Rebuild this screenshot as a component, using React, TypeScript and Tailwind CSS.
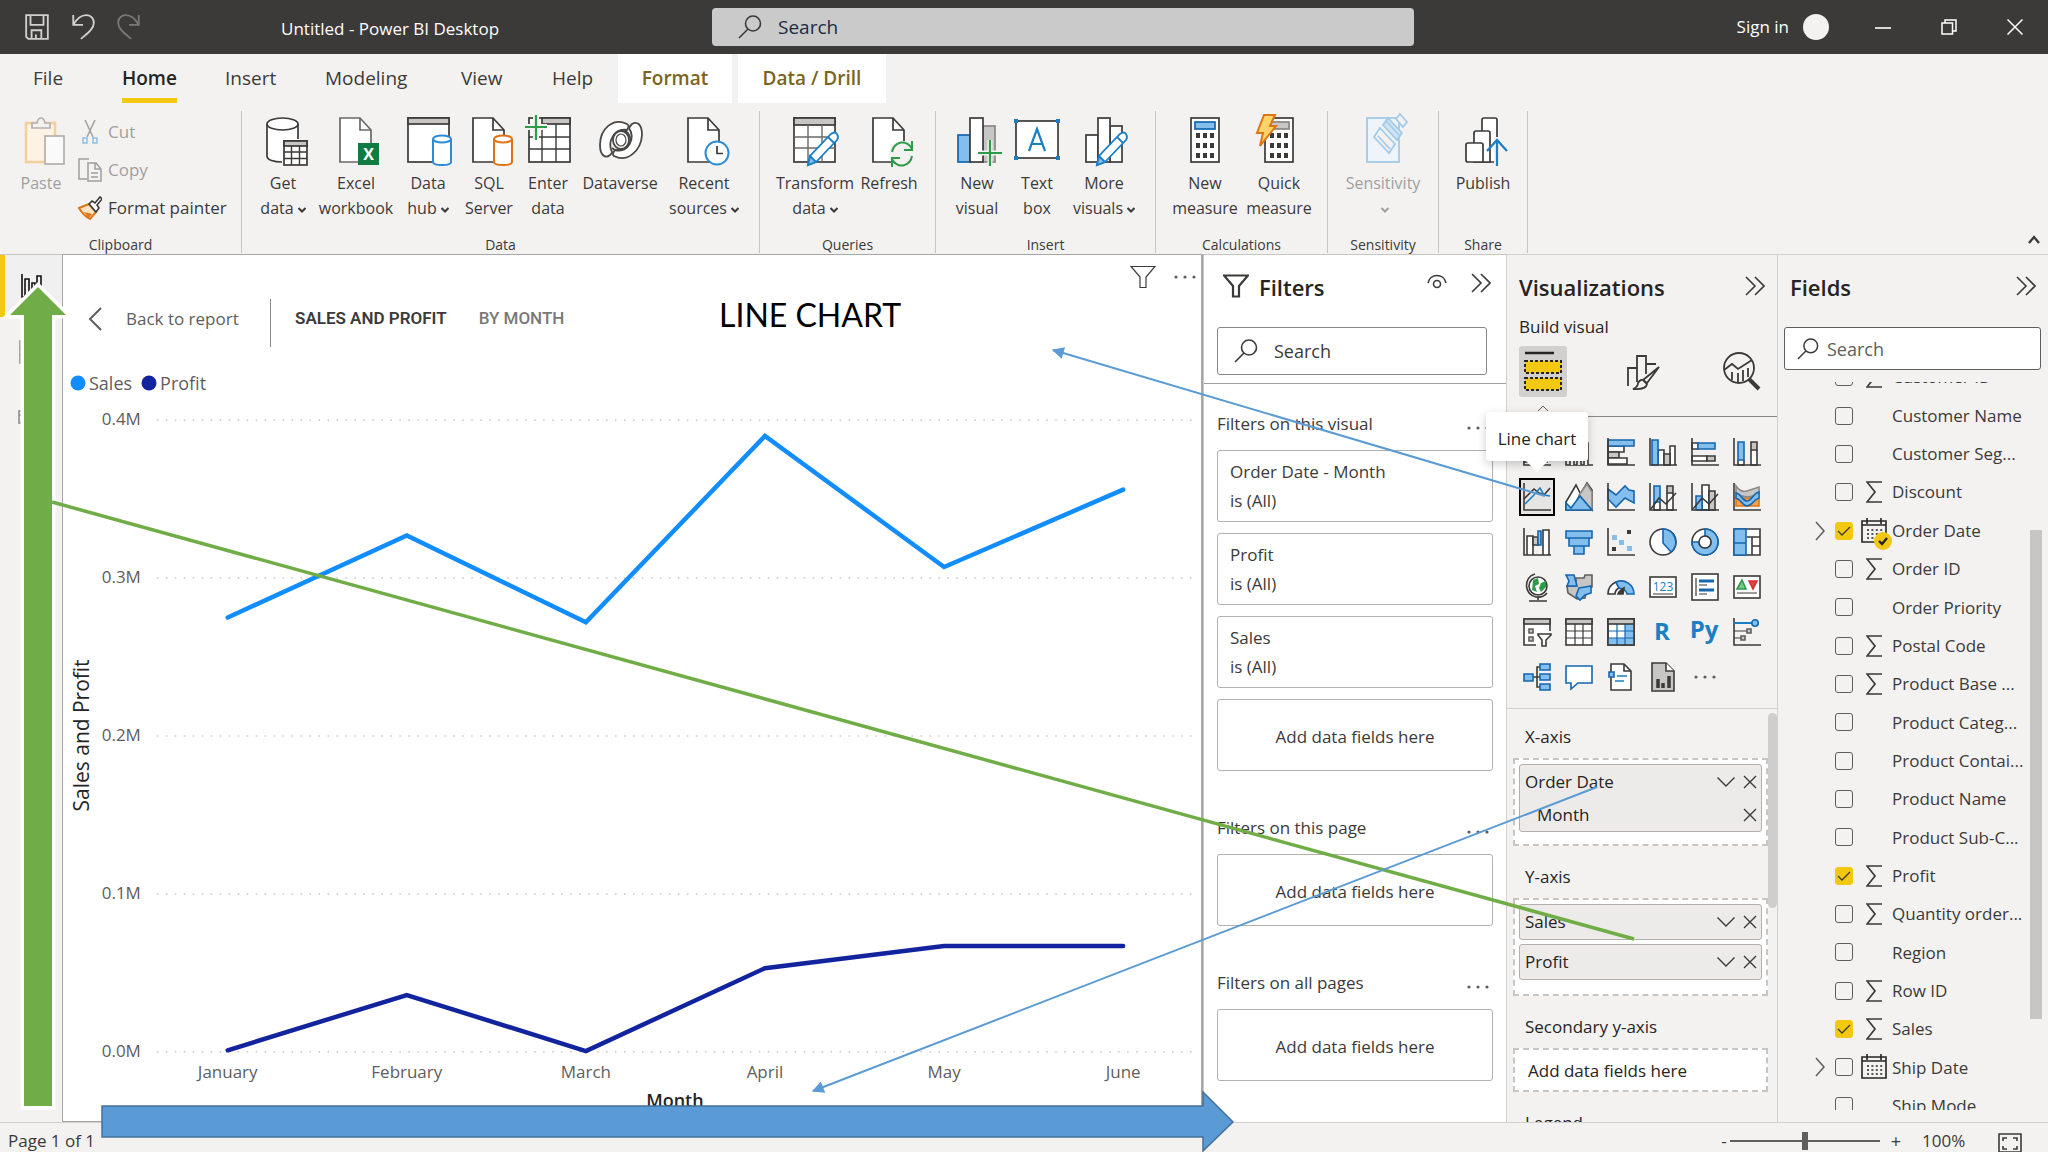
import { useState, type ReactNode } from "react";
import clsx from "clsx";

const INK = "#3b3a39";
const BLUE = "#1a7fc4";
const BLUE_FILL = "#83beec";
const BLUE_EDGE = "#1466ae";
const GREY_FILL = "#c8c6c4";
const GREEN = "#2f9b49";
const ORANGE = "#de7414";

/* ---------- Ribbon icons (48 x 52 box) ---------- */

function RibbonIcon({ children }: { children: ReactNode }) {
  return (
    <svg
      viewBox="0 0 48 52"
      className="h-[52px] w-12 shrink-0 overflow-visible"
      fill="none"
      stroke={INK}
      strokeWidth="1.7"
      aria-hidden="true"
    >
      {children}
    </svg>
  );
}

function Page() {
  return (
    <>
      <path d="M8 3H28L39 15V47H8Z" fill="#fff" />
      <path d="M28 3V15H39" />
    </>
  );
}

function Cylinder({ color }: { color: string }) {
  return (
    <g stroke={color} strokeWidth="2">
      <path d="M29 24V47C29 49 33 50 38 50S47 49 47 47V24" fill="#fff" />
      <ellipse cx="38" cy="24" rx="9" ry="3.5" fill="#fff" />
    </g>
  );
}

function Pencil() {
  return (
    <g stroke={BLUE} strokeWidth="1.8">
      <path d="M40 19Q44 16 46 19T46 25L25 47L17 50L19 41Z" fill="#fff" />
      <path d="M19 41L25 47L17 50Z" fill={BLUE_FILL} />
      <path d="M37 22L43 28" />
    </g>
  );
}

function Keys({ x }: { x: number }) {
  return (
    <g fill={INK} stroke="none">
      {[18, 28, 38].map((y) =>
        [0, 7, 14].map((dx) => <rect key={`${y}-${dx}`} x={x + dx} y={y} width="4" height="5" />),
      )}
    </g>
  );
}

const ribbonIcons: Record<string, ReactNode> = {
  getData: (
    <>
      <path d="M8 9V41C8 45 15 47 23 47H25V26H39V9Z" fill="#fff" stroke="none" />
      <path d="M8 9V41C8 45 15 47 23 47M39 9V24" />
      <ellipse cx="23.500" cy="9" rx="15.500" ry="6" fill="#fff" />
      <rect x="25" y="26" width="23" height="24" fill="#fff" />
      <rect x="25" y="26" width="23" height="5" fill={GREY_FILL} />
      <path d="M25 37H48M25 43.500H48M32.500 31V50M40.500 31V50" strokeWidth="1.400" />
    </>
  ),
  excel: (
    <>
      <g stroke="#6b6967">
        <Page />
      </g>
      <rect x="26" y="28" width="21" height="22" fill="#107c41" stroke="none" />
      <text x="36.500" y="45" textAnchor="middle" fill="#fff" stroke="none" fontSize="16" fontWeight="700" fontFamily="Open Sans">
        X
      </text>
    </>
  ),
  dataHub: (
    <>
      <rect x="4" y="3" width="41" height="44" fill="#fff" />
      <rect x="4" y="3" width="41" height="6" fill={GREY_FILL} />
      <Cylinder color="#2b8bd6" />
    </>
  ),
  sql: (
    <>
      <Page />
      <Cylinder color={ORANGE} />
    </>
  ),
  enterData: (
    <>
      <rect x="5" y="3" width="41" height="44" fill="#fff" />
      <rect x="18" y="3" width="28" height="6" fill={GREY_FILL} />
      <path d="M5 22H46M5 34H46M18 9V47M32 9V47" strokeWidth="1.400" />
      <path d="M1 12H23M12 1V24" stroke="#f3f2f1" strokeWidth="6" />
      <path d="M1 12H23M12 0V25" stroke={GREEN} strokeWidth="2.200" />
    </>
  ),
  dataverse: (
    <g stroke="#4a4846" strokeWidth="1.8" fill="#fff">
      <path d="M31 9C17 2 4 14 4 30C4 40 9 44 14 40C15 39 16 38 16 37C11 27 18 13 31 15C33 12 33 10 31 9Z" />
      <path d="M18 41C31 48 45 36 46 20C46 9 41 6 36 9C35 10 34 11 33 13C40 24 32 38 19 35C17 38 16 40 18 41Z" />
      <path d="M25 15C33 15 36 24 33 29C30 35 20 37 16 33" fill="none" />
      <ellipse cx="25" cy="25" rx="8" ry="9" />
      <ellipse cx="25" cy="25" rx="5" ry="6" strokeWidth="1.2" />
    </g>
  ),
  recent: (
    <>
      <Page />
      <circle cx="37" cy="38" r="11.500" fill="#fff" stroke="#2b8bd6" strokeWidth="2" />
      <path d="M37 31V38.500H43" />
    </>
  ),
  transform: (
    <>
      <rect x="3" y="3" width="41" height="44" fill="#fff" />
      <rect x="3" y="3" width="41" height="7" fill={GREY_FILL} />
      <path d="M3 22H44M3 33H44M17 10V47M31 10V47" strokeWidth="1.400" stroke="#6b6967" />
      <Pencil />
    </>
  ),
  refresh: (
    <>
      <Page />
      <circle cx="37" cy="39" r="13" fill="#f3f2f1" stroke="none" />
      <path d="M27 37A10.500 11 0 0 1 47 34M47 26V35H39M47 41A10.500 11 0 0 1 27 44M27 52V43H35" stroke={GREEN} strokeWidth="2" />
    </>
  ),
  newVisual: (
    <>
      <rect x="5" y="20" width="12" height="27" fill={BLUE_FILL} stroke={BLUE_EDGE} />
      <rect x="30" y="11" width="12" height="36" fill={GREY_FILL} stroke="#8a8886" />
      <rect x="17" y="3" width="13" height="44" fill="#fff" />
      <path d="M25 38H49M37 25V51" stroke="#f3f2f1" strokeWidth="5" />
      <path d="M25 38H49M37 25V51" stroke={GREEN} strokeWidth="2.200" />
    </>
  ),
  textBox: (
    <>
      <rect x="3" y="6" width="42" height="37" fill="#fff" />
      <g fill={BLUE} stroke="none">
        <rect x="1" y="4" width="4" height="4" />
        <rect x="43" y="4" width="4" height="4" />
        <rect x="1" y="41" width="4" height="4" />
        <rect x="43" y="41" width="4" height="4" />
      </g>
      <path d="M16 36L24 14L32 36M19 29H29" stroke={BLUE} strokeWidth="2.200" />
    </>
  ),
  moreVisuals: (
    <>
      <rect x="6" y="20" width="12" height="27" fill="#fff" />
      <rect x="30" y="11" width="12" height="36" fill="#fff" />
      <rect x="18" y="3" width="12" height="44" fill="#fff" />
      <Pencil />
    </>
  ),
  newMeasure: (
    <>
      <rect x="10" y="3" width="28" height="44" fill="#fff" />
      <rect x="14" y="7" width="20" height="7" fill={BLUE_FILL} stroke={BLUE_EDGE} />
      <Keys x={15} />
    </>
  ),
  quickMeasure: (
    <>
      <rect x="10" y="3" width="28" height="44" fill="#fff" />
      <rect x="16" y="7" width="18" height="7" fill={GREY_FILL} stroke="#8a8886" />
      <Keys x={15} />
      <path d="M9 0H20L15 11H21L5 31L8 18H2Z" fill="#ffd56b" stroke={ORANGE} strokeWidth="2" />
    </>
  ),
  sensitivity: (
    <g stroke="#a3cbe8" strokeWidth="1.800">
      <rect x="8" y="3" width="32" height="44" fill="#eef4f9" />
      <path d="M21 13L36 29L30 38L15 22Z" fill="#f3f2f1" />
      <path d="M19 21L31 34" />
      <path d="M29 3L43 18L38 25L24 10Z" fill="#cfe3f3" />
      <path d="M27 6L41 21" />
      <path d="M41 -1L48 7L44 12L37 4Z" fill="#f3f2f1" />
    </g>
  ),
  publish: (
    <>
      <path d="M23 47V5Q23 3 25 3H36Q38 3 38 5V47Z" fill="#fff" />
      <path d="M15 47V18Q15 16 17 16H29Q31 16 31 18V47Z" fill="#fff" />
      <path d="M7 45V30Q7 28 9 28H22Q24 28 24 30V47H9Q7 47 7 45Z" fill="#fff" />
      <path d="M38 22V52" stroke="#f3f2f1" strokeWidth="6" />
      <path d="M38 26V51M28 36L38 25L48 36" stroke={BLUE} strokeWidth="2.200" />
    </>
  ),
};

/* ---------- Small shared glyphs ---------- */

function SearchIcon({ className }: { className?: string }) {
  return (
    <svg viewBox="0 0 24 24" className={className} fill="none" stroke={INK} strokeWidth="1.6" aria-hidden="true">
      <circle cx="15" cy="8.500" r="7.500" />
      <path d="M10 14L1 23" />
    </svg>
  );
}

function DoubleChevron() {
  return (
    <svg viewBox="0 0 20 20" className="size-5" fill="none" stroke={INK} strokeWidth="1.6" aria-hidden="true">
      <path d="M1 1L10 10L1 19M10 1L19 10L10 19" />
    </svg>
  );
}

function Caret() {
  return (
    <svg viewBox="0 0 8 6" className="ml-1 inline-block h-[6px] w-2 align-middle" fill="none" stroke="currentColor" strokeWidth="2" aria-hidden="true">
      <path d="M0.500 1L4 4.500L7.500 1" />
    </svg>
  );
}

function Dots() {
  return (
    <svg viewBox="0 0 22 4" className="h-1 w-[22px]" fill="#605e5c" aria-hidden="true">
      <circle cx="2" cy="2" r="1.600" />
      <circle cx="11" cy="2" r="1.600" />
      <circle cx="20" cy="2" r="1.600" />
    </svg>
  );
}

function Funnel({ className, weight }: { className?: string; weight: number }) {
  return (
    <svg viewBox="0 0 26 24" className={className} fill="none" stroke={INK} strokeWidth={weight} aria-hidden="true">
      <path d="M1 1.500H25L16 12V22.500H10V12Z" />
    </svg>
  );
}

/* ---------- Title bar ---------- */

function TitleBar() {
  return (
    <header className="flex h-[54px] shrink-0 items-center bg-[#3b3a39] pl-6 text-white">
      <div className="flex w-[257px] items-center gap-5">
        <button aria-label="Save">
          <svg viewBox="0 0 24 24" className="size-[26px]" fill="none" stroke="#d2d0ce" strokeWidth="1.7">
            <path d="M2 1H22V23H4L2 21ZM6 1V10H18V1M7 23V15H16V23M11 19V23" />
          </svg>
        </button>
        <button aria-label="Undo">
          <svg viewBox="0 0 24 24" className="size-[26px]" fill="none" stroke="#d2d0ce" strokeWidth="1.7">
            <path d="M3 1V10H12M3 10C7 3 11 1 15 1C20 1 22 5 22 8C22 14 16 18 10 23" />
          </svg>
        </button>
        <button aria-label="Redo">
          <svg viewBox="0 0 24 24" className="size-[26px]" fill="none" stroke="#7a7876" strokeWidth="1.7">
            <path d="M21 1V10H12M21 10C17 3 13 1 9 1C4 1 2 5 2 8C2 14 8 18 14 23" />
          </svg>
        </button>
      </div>
      <h1 className="w-[431px] pt-1 text-[17px]">Untitled - Power BI Desktop</h1>
      <label className="mb-px flex h-[38px] w-[702px] items-center gap-4 rounded-sm bg-[#cacaca] pl-[26px]">
        <SearchIcon className="size-6" />
        <input
          aria-label="Search commands"
          placeholder="Search"
          className="h-full flex-1 bg-transparent text-[19px] text-[#1b2a41] outline-none placeholder:text-[#1b2a41]"
        />
      </label>
      <div className="ml-auto flex items-center">
        <button className="text-[17px]">Sign in</button>
        <span className="ml-[14px] size-[26px] rounded-full bg-[#f3f2f1]" />
        <button aria-label="Minimize" className="ml-[42px] grid h-8 w-6 place-items-center">
          <svg viewBox="0 0 16 16" className="size-4" stroke="#fff" strokeWidth="1.6">
            <path d="M0 9H16" />
          </svg>
        </button>
        <button aria-label="Restore" className="ml-[42px] grid h-8 w-6 place-items-center">
          <svg viewBox="0 0 16 16" className="size-4" fill="none" stroke="#fff" strokeWidth="1.5">
            <path d="M1 4H11.500V15H1ZM4 4V1H15V12H12" />
          </svg>
        </button>
        <button aria-label="Close" className="mr-[21px] ml-[42px] grid h-8 w-6 place-items-center">
          <svg viewBox="0 0 16 16" className="size-4" stroke="#fff" strokeWidth="1.5">
            <path d="M0.500 0.500L15.500 15.500M15.500 0.500L0.500 15.500" />
          </svg>
        </button>
      </div>
    </header>
  );
}

/* ---------- Ribbon ---------- */

const tabs = [
  { name: "File", className: "w-[98px] pl-[33px]" },
  { name: "Home", className: "w-[103px] pl-6" },
  { name: "Insert", className: "w-[100px] pl-6" },
  { name: "Modeling", className: "w-[136px] pl-6" },
  { name: "View", className: "w-[91px] pl-6" },
  { name: "Help", className: "w-[90px] pl-6" },
];

function RibbonTabs() {
  return (
    <nav className="flex h-[49px] shrink-0 text-[19px] text-[#3b3a39]">
      {tabs.map((tab) => (
        <button key={tab.name} className={clsx("text-left", tab.className)}>
          {tab.name === "Home" ? (
            <span className="inline-flex h-[49px] items-center border-b-[5px] border-[#f2c811] pt-1 font-semibold text-[#252423]">
              Home
            </span>
          ) : (
            tab.name
          )}
        </button>
      ))}
      <button className="mr-[6px] w-[114px] bg-white font-semibold text-[#7a6520]">Format</button>
      <button className="w-[148px] bg-white font-semibold text-[#7a6520]">Data / Drill</button>
    </nav>
  );
}

type RibbonItem = { icon: string; lines: string[]; caret?: boolean; width: string; disabled?: boolean };

const ribbonGroups: { name: string; className: string; pad: string; items: RibbonItem[] }[] = [
  {
    name: "Data",
    className: "w-[518px]",
    pad: "pl-2",
    items: [
      { icon: "getData", lines: ["Get", "data"], caret: true, width: "w-[66px]" },
      { icon: "excel", lines: ["Excel", "workbook"], width: "w-[80px]" },
      { icon: "dataHub", lines: ["Data", "hub"], caret: true, width: "w-[64px]" },
      { icon: "sql", lines: ["SQL", "Server"], width: "w-[58px]" },
      { icon: "enterData", lines: ["Enter", "data"], width: "w-[60px]" },
      { icon: "dataverse", lines: ["Dataverse"], width: "w-[84px]" },
      { icon: "recent", lines: ["Recent", "sources"], caret: true, width: "w-[84px]" },
    ],
  },
  {
    name: "Queries",
    className: "w-[176px]",
    pad: "pl-[14px]",
    items: [
      { icon: "transform", lines: ["Transform", "data"], caret: true, width: "w-[82px]" },
      { icon: "refresh", lines: ["Refresh"], width: "w-[66px]" },
    ],
  },
  {
    name: "Insert",
    className: "w-[220px]",
    pad: "pl-[14px]",
    items: [
      { icon: "newVisual", lines: ["New", "visual"], width: "w-[54px]" },
      { icon: "textBox", lines: ["Text", "box"], width: "w-[66px]" },
      { icon: "moreVisuals", lines: ["More", "visuals"], caret: true, width: "w-[68px]" },
    ],
  },
  {
    name: "Calculations",
    className: "w-[172px]",
    pad: "pl-3",
    items: [
      { icon: "newMeasure", lines: ["New", "measure"], width: "w-[74px]" },
      { icon: "quickMeasure", lines: ["Quick", "measure"], width: "w-[74px]" },
    ],
  },
  {
    name: "Sensitivity",
    className: "w-[111px]",
    pad: "pl-2",
    items: [{ icon: "sensitivity", lines: ["Sensitivity", ""], caret: true, width: "w-[94px]", disabled: true }],
  },
  {
    name: "Share",
    className: "w-[89px]",
    pad: "pl-2",
    items: [{ icon: "publish", lines: ["Publish"], width: "w-[72px]" }],
  },
];

function RibbonButton({ item }: { item: RibbonItem }) {
  return (
    <button
      disabled={item.disabled}
      className={clsx(
        "flex flex-col items-center text-base leading-[25px] whitespace-nowrap",
        item.width,
        item.disabled ? "text-[#a19f9d]" : "text-[#3b3a39]",
      )}
    >
      <RibbonIcon>{ribbonIcons[item.icon]}</RibbonIcon>
      {item.lines.map((line, i) => (
        <span key={i} className={i === 0 ? "mt-1" : undefined}>
          {line}
          {item.caret && i === item.lines.length - 1 && <Caret />}
        </span>
      ))}
    </button>
  );
}

function ClipboardGroup() {
  return (
    <section className="flex w-[242px] shrink-0 flex-col justify-between border-r border-[#c8c6c4]">
      <div className="flex pl-[14px]">
        <button disabled className="flex w-[54px] flex-col items-center pt-1 text-base leading-[25px] text-[#a19f9d]">
          <RibbonIcon>
            <path d="M9 8H38V47H9Z" fill="#fdf3e4" stroke="#f3cf9c" strokeWidth="2.500" />
            <path d="M15 13V8H20Q21 3 24 3T28 8H33V13Z" fill="#f3f2f1" stroke="#b3b0ad" />
            <rect x="28" y="21" width="19" height="28" fill="#fafafa" stroke="#b3b0ad" />
          </RibbonIcon>
          <span className="mt-1">Paste</span>
        </button>
        <div className="flex flex-col pt-[2px] pl-[10px] text-[17px] text-[#3b3a39]">
          <button disabled className="flex h-[38px] items-center gap-[6px] text-[#a19f9d]">
            <svg viewBox="0 0 24 24" className="size-6" fill="none" stroke="#a19f9d" strokeWidth="1.5" aria-hidden="true">
              <path d="M7 0L15 17M17 0L9 17" />
              <path d="M5 18H9V23H5ZM15 18H19V23H15Z" stroke="#8fc0e6" />
            </svg>
            Cut
          </button>
          <button disabled className="flex h-[38px] items-center gap-[6px] text-[#a19f9d]">
            <svg viewBox="0 0 24 24" className="size-6" fill="none" stroke="#a19f9d" strokeWidth="1.5" aria-hidden="true">
              <path d="M9 21H1V1H11M10 5H18L23 11V23H10ZM17 5V11H23M13 15H20M13 19H20" />
            </svg>
            Copy
          </button>
          <button className="flex h-[38px] items-center gap-[6px] whitespace-nowrap">
            <svg viewBox="0 0 24 24" className="size-6" fill="none" stroke={INK} strokeWidth="1.6" aria-hidden="true">
              <path d="M1 12L11 8L18 16L12 23Q5 19 1 12Z" fill="#fde3c4" stroke={ORANGE} strokeWidth="2" />
              <path d="M6 16L14 18L11 22Z" fill={ORANGE} stroke="none" />
              <path d="M11 8L14 5L17 7L22 1L24 3L19 9L21 12L18 16Z" fill="#fff" />
            </svg>
            Format painter
          </button>
        </div>
      </div>
      <p className="text-center text-sm leading-4 text-[#3b3a39]">Clipboard</p>
    </section>
  );
}

function Ribbon() {
  return (
    <div className="flex h-[151px] shrink-0 pt-2 pb-px">
      <ClipboardGroup />
      {ribbonGroups.map((group) => (
        <section
          key={group.name}
          className={clsx("flex shrink-0 flex-col justify-between border-r border-[#c8c6c4] pt-1", group.className)}
        >
          <div className={clsx("flex", group.pad)}>
            {group.items.map((item) => (
              <RibbonButton key={item.icon} item={item} />
            ))}
          </div>
          <p className="text-center text-sm leading-4 text-[#3b3a39]">{group.name}</p>
        </section>
      ))}
      <button aria-label="Collapse ribbon" className="mt-auto mr-2 mb-2 ml-auto">
        <svg viewBox="0 0 12 10" className="h-[10px] w-3" fill="none" stroke={INK} strokeWidth="2.4">
          <path d="M1 8L6 2L11 8" />
        </svg>
      </button>
    </div>
  );
}

/* ---------- Left rail ---------- */

function ViewRail() {
  return (
    <nav className="flex w-[62px] shrink-0 flex-col border-t border-[#c8c6c4]">
      <button aria-label="Report view" className="flex h-[62px] items-center border-l-[5px] border-[#f2c811] bg-[#f0f0f0] pl-4">
        <svg viewBox="0 0 22 24" className="h-6 w-[22px]" fill="none" stroke="#111" strokeWidth="1.600">
          <path d="M1 0V23H22M4 23V5H8V23M11 23V9H14V23M16 23V2H20V23" />
        </svg>
      </button>
      <button aria-label="Data view" className="flex h-[70px] items-center pl-[19px]">
        <svg viewBox="0 0 24 24" className="size-6" fill="none" stroke="#8a8886" strokeWidth="1.5">
          <path d="M1 1H23V23H1ZM1 8H23M1 15H23M9 8V23" />
        </svg>
      </button>
      <button aria-label="Model view" className="flex h-[60px] items-center pl-[18px]">
        <svg viewBox="0 0 24 24" className="size-6" fill="none" stroke="#8a8886" strokeWidth="1.5">
          <path d="M1 6H9V18H1ZM1 10H9M15 1H23V9H15ZM15 15H23V23H15Z" />
        </svg>
      </button>
    </nav>
  );
}

/* ---------- Report canvas ---------- */

const months = ["January", "February", "March", "April", "May", "June"];
const series = [
  { name: "Sales", color: "#118dff", values: [0.275, 0.327, 0.272, 0.39, 0.307, 0.356] },
  { name: "Profit", color: "#12239e", values: [0.001, 0.036, 0.0005, 0.053, 0.067, 0.067] },
];
const ticks = [0.4, 0.3, 0.2, 0.1, 0];

const xAt = (i: number) => 165 + i * 179.4;
const yAt = (v: number) => 653 - v * 1582;

function LineChart() {
  return (
    <svg viewBox="0 0 1140 719" className="min-h-0 w-full flex-1" preserveAspectRatio="xMinYMin meet" role="img" aria-label="Sales and Profit by Month">
      {ticks.map((tick) => (
        <g key={tick}>
          <line x1="94" x2="1131" y1={yAt(tick)} y2={yAt(tick)} stroke="#c8c6c4" strokeWidth="1.500" strokeDasharray="1.500 7.500" />
          <text x="78" y={yAt(tick) + 5} textAnchor="end" fontSize="17" fill="#605e5c">
            {tick.toFixed(1)}M
          </text>
        </g>
      ))}
      {series.map((s) => (
        <polyline
          key={s.name}
          points={s.values.map((v, i) => `${xAt(i)},${yAt(v)}`).join(" ")}
          fill="none"
          stroke={s.color}
          strokeWidth="4.5"
          strokeLinecap="round"
          strokeLinejoin="miter"
        />
      ))}
      {months.map((m, i) => (
        <text key={m} x={xAt(i)} y="679" textAnchor="middle" fontSize="17" fill="#605e5c">
          {m}
        </text>
      ))}
      <text x="613" y="708" textAnchor="middle" fontSize="18" fontWeight="600" fill="#252423">
        Month
      </text>
      <text x="0" y="0" transform="translate(26 336) rotate(-90)" textAnchor="middle" fontSize="21" fontWeight="500" fill="#252423">
        Sales and Profit
      </text>
    </svg>
  );
}

function ReportCanvas() {
  return (
    <main className="flex min-w-0 flex-1 flex-col border border-r-2 border-[#a9a7a5] bg-white">
      <div className="flex h-11 shrink-0 items-center justify-end gap-[18px] pr-[5px]">
        <button aria-label="Filters on visual">
          <Funnel className="h-6 w-[26px]" weight={1.2} />
        </button>
        <button aria-label="More options">
          <Dots />
        </button>
      </div>
      <div className="flex h-[48px] shrink-0 pl-[25px] whitespace-nowrap text-[#605e5c]">
        <a href="#report" className="flex w-[182px] items-center gap-6 pb-2 text-[17px]">
          <svg viewBox="0 0 14 24" className="h-6 w-[14px]" fill="none" stroke="#605e5c" strokeWidth="2" aria-hidden="true">
            <path d="M13 1L2 12L13 23" />
          </svg>
          Back to report
        </a>
        <div className="flex w-[449px] items-center gap-8 border-l border-[#8a8886] pb-2 pl-6 font-[Roboto] text-[17px]">
          <span className="font-semibold text-[#3b3a39]">SALES AND PROFIT</span>
          <span className="font-medium text-[#7a7876]">BY MONTH</span>
        </div>
        <h2 className="font-[Lato] text-[32px] leading-8 text-black">LINE CHART</h2>
      </div>
      <div className="flex h-[53px] shrink-0 items-center gap-[9px] pt-[18px] pl-[7px] text-lg text-[#605e5c]">
        {series.map((s) => (
          <span key={s.name} className="flex items-center gap-[3px]">
            <svg viewBox="0 0 16 16" className="size-4" aria-hidden="true">
              <circle cx="8" cy="8" r="7.500" fill={s.color} />
            </svg>
            {s.name}
          </span>
        ))}
      </div>
      <LineChart />
    </main>
  );
}

/* ---------- Filters pane ---------- */

const visualFilters = ["Order Date - Month", "Profit", "Sales"];

function FilterHeading({ children }: { children: ReactNode }) {
  return (
    <div className="flex h-[26px] items-center justify-between pr-1">
      <h3>{children}</h3>
      <button aria-label="More options" className="pt-2">
        <Dots />
      </button>
    </div>
  );
}

function AddFields() {
  return (
    <button className="flex h-[72px] w-full items-center justify-center rounded-[3px] border border-[#b3b0ad] bg-white pt-1">
      Add data fields here
    </button>
  );
}

function FiltersPane() {
  return (
    <aside className="flex w-[303px] shrink-0 flex-col overflow-hidden border-t border-l border-[#c8c6c4] bg-white text-[17px] text-[#3b3a39]">
      <div className="flex h-[72px] shrink-0 items-start pt-4 pr-[15px] pl-[19px]">
        <Funnel className="mt-[3px] h-6 w-[26px]" weight={2.2} />
        <h2 className="ml-[10px] flex-1 text-[22px] leading-8 font-semibold text-[#252423]">Filters</h2>
        <button aria-label="Show or hide filter pane" className="mt-[3px]">
          <svg viewBox="0 0 20 16" className="h-4 w-5" fill="none" stroke={INK} strokeWidth="1.6">
            <path d="M1 9C3 -1 17 -1 19 9" />
            <circle cx="10" cy="10" r="3.500" />
          </svg>
        </button>
        <button aria-label="Collapse filters" className="mt-[2px] ml-6">
          <DoubleChevron />
        </button>
      </div>
      <div className="border-b border-[#a19f9d] pr-[19px] pb-2 pl-[13px]">
        <label className="flex h-[48px] items-center gap-4 rounded-[3px] border border-[#8a8886] pl-4">
          <SearchIcon className="size-6 shrink-0" />
          <input
            aria-label="Search filters"
            placeholder="Search"
            className="w-full bg-transparent text-lg outline-none placeholder:text-[#3b3a39]"
          />
        </label>
      </div>
      <div className="flex min-h-0 flex-1 flex-col pt-[27px] pr-[13px] pl-[13px]">
        <FilterHeading>Filters on this visual</FilterHeading>
        <div className="mt-[13px] flex flex-col gap-[11px]">
          {visualFilters.map((name) => (
            <button
              key={name}
              className="flex h-[72px] flex-col justify-center rounded-[3px] border border-[#b3b0ad] bg-white pl-3 text-left leading-[29px]"
            >
              <span>{name}</span>
              <span>is (All)</span>
            </button>
          ))}
          <AddFields />
        </div>
        <div className="mt-11">
          <FilterHeading>Filters on this page</FilterHeading>
        </div>
        <div className="mt-[13px]">
          <AddFields />
        </div>
        <div className="mt-11">
          <FilterHeading>Filters on all pages</FilterHeading>
        </div>
        <div className="mt-[13px]">
          <AddFields />
        </div>
      </div>
    </aside>
  );
}

/* ---------- Visualizations pane ---------- */

const axes = "M1 0V27H28";

const vizIcons: { name: string; art: ReactNode }[] = [
  {
    name: "Stacked bar chart",
    art: (
      <>
        <path d={axes} />
        <path d="M1 3H20V8H1ZM1 11H14V16H1ZM1 19H24V24H1Z" fill="#fff" />
      </>
    ),
  },
  {
    name: "Stacked column chart",
    art: (
      <>
        <path d={axes} />
        <path d="M5 27V10H9V27M12 27V14H16V27M19 27V5H23V27" fill="#fff" />
      </>
    ),
  },
  {
    name: "Clustered bar chart",
    art: (
      <>
        <path d="M1 8H17V14H1Z" fill="#fff" />
        <path d="M1 14H12V20H1Z" fill={GREY_FILL} />
        <path d="M1 20H20V26H1Z" fill="#fff" />
        <path d="M1 2H27V8H1Z" fill={BLUE_FILL} stroke={BLUE_EDGE} />
        <path d={axes} />
      </>
    ),
  },
  {
    name: "Clustered column chart",
    art: (
      <>
        <path d="M9 27V12H15V27M21 27V8H26V27" fill="#fff" />
        <path d="M15 27V16H21V27Z" fill={GREY_FILL} />
        <path d="M3 27V2H9V27Z" fill={BLUE_FILL} stroke={BLUE_EDGE} />
        <path d={axes} />
      </>
    ),
  },
  {
    name: "100% stacked bar chart",
    art: (
      <>
        <path d="M1 5H7V11H1ZM1 18H16V23H1Z" fill="#fff" />
        <path d="M16 18H24V23H16Z" fill={GREY_FILL} />
        <path d="M7 5H24V11H7Z" fill={BLUE_FILL} stroke={BLUE_EDGE} />
        <path d={axes} />
      </>
    ),
  },
  {
    name: "100% stacked column chart",
    art: (
      <>
        <path d="M5 22V27H11V22M18 12V27H24V12" fill="#fff" />
        <path d="M18 4H24V12H18Z" fill={GREY_FILL} />
        <path d="M5 4H11V22H5Z" fill={BLUE_FILL} stroke={BLUE_EDGE} />
        <path d={axes} />
      </>
    ),
  },
  {
    name: "Line chart",
    art: (
      <>
        <path d={axes} />
        <path d="M1 16L11 6L16 10L21 12L27 5" />
        <path d="M2 21L10 13L17 5L21 12L27 13" stroke={BLUE} />
      </>
    ),
  },
  {
    name: "Area chart",
    art: (
      <>
        <path d="M12 17L22 0L27 7V27H1V19L11 2L17 14" fill="#fff" />
        <path d="M14 12L22 1L27 9V27Z" fill={GREY_FILL} stroke="#8a8886" />
        <path d="M1 27V20L6 25L15 13L27 27Z" fill={BLUE_FILL} stroke={BLUE_EDGE} />
      </>
    ),
  },
  {
    name: "Stacked area chart",
    art: (
      <>
        <path d="M1 6L9 12L18 3L22 7L27 8V20L18 15L9 24L1 16Z" fill={BLUE_FILL} stroke={BLUE_EDGE} />
        <path d={axes} />
      </>
    ),
  },
  {
    name: "Line and stacked column chart",
    art: (
      <>
        <path d="M5 19V27H11V19M18 10V27H24V10" fill="#fff" />
        <path d="M18 3H24V10H18Z" fill={GREY_FILL} />
        <path d="M5 3H11V19H5Z" fill={BLUE_FILL} stroke={BLUE_EDGE} />
        <path d={axes} />
        <path d="M2 26L10 15L17 21L27 10" />
      </>
    ),
  },
  {
    name: "Line and clustered column chart",
    art: (
      <>
        <path d="M11 27V2H18V27Z" fill="#fff" />
        <path d="M18 27V8H24V27Z" fill={GREY_FILL} />
        <path d="M5 27V13H11V27Z" fill={BLUE_FILL} stroke={BLUE_EDGE} />
        <path d={axes} />
        <path d="M2 26L11 15L18 21L27 11" />
      </>
    ),
  },
  {
    name: "Ribbon chart",
    art: (
      <>
        <path d="M3 15H26V23H3Z" fill="#f8a24a" stroke={ORANGE} />
        <path d="M3 3Q8 10 14 8T26 4V10Q15 18 3 10Z" fill={GREY_FILL} stroke="#8a8886" />
        <path d="M3 10C9 11 9 18 14 18S20 10 26 9V15C20 17 19 23 14 23S9 17 3 15Z" fill={BLUE_FILL} stroke={BLUE_EDGE} />
        <path d={axes} />
      </>
    ),
  },
  {
    name: "Waterfall chart",
    art: (
      <>
        <path d="M4 27V8H10V27M20 27V2H26V27" fill="#fff" />
        <path d="M10 9H15V17H10Z" fill={GREY_FILL} />
        <path d="M15 3H18V17H15Z" fill={BLUE_FILL} stroke={BLUE_EDGE} />
        <path d={axes} />
      </>
    ),
  },
  {
    name: "Funnel chart",
    art: <path d="M1 3H27V10H1ZM4 10H24V18H4ZM9 18H19V26H9Z" fill={BLUE_FILL} stroke={BLUE_EDGE} />,
  },
  {
    name: "Scatter chart",
    art: (
      <>
        <path d={axes} />
        <path d="M20 2H24V6H20ZM5 19H9V23H5Z" fill={INK} stroke="none" />
        <path d="M5 7H10V12H5ZM12 12H17V17H12ZM20 18H25V23H20Z" fill={BLUE_FILL} stroke="none" />
      </>
    ),
  },
  {
    name: "Pie chart",
    art: (
      <>
        <circle cx="14" cy="14" r="13" fill="#fff" />
        <path d="M14 1A13 13 0 0 1 22 24L14 15Z" fill={BLUE_FILL} stroke={BLUE_EDGE} />
      </>
    ),
  },
  {
    name: "Donut chart",
    art: (
      <>
        <circle cx="14" cy="14" r="13" fill="#fff" />
        <path d="M14 1A13 13 0 1 1 1 14H8A6 6 0 1 0 14 8Z" fill={BLUE_FILL} stroke={BLUE_EDGE} />
        <circle cx="14" cy="14" r="6" fill="#fff" />
      </>
    ),
  },
  {
    name: "Treemap",
    art: (
      <>
        <path d="M1 1H27V27H1ZM14 9H27M19 9V27M19 18H27" fill="#fff" />
        <path d="M1 1H13V27H1ZM1 15H13" fill={BLUE_FILL} stroke={BLUE_EDGE} />
      </>
    ),
  },
  {
    name: "Map",
    art: (
      <>
        <circle cx="15" cy="13" r="9" fill="#fff" />
        <path d="M10 7L15 5L16 11L12 13L14 19L9 17ZM18 10L23 8L23 14L18 19L16 15Z" fill={GREEN} stroke="none" />
        <path d="M12 1C0 4 1 22 13 24Q20 25 24 20M15 24V27M6 28H24" />
      </>
    ),
  },
  {
    name: "Filled map",
    art: (
      <>
        <path d="M11 5L19 5L20 2H27V14L22 16L20 25L12 26L3 20L2 13L11 13Z" fill={GREY_FILL} stroke="#605e5c" />
        <path d="M1 2H9L12 13H2L4 8ZM14 15L26 13V20L20 22L15 27L11 23Z" fill={BLUE_FILL} stroke={BLUE_EDGE} />
      </>
    ),
  },
  {
    name: "Gauge",
    art: (
      <>
        <path d="M1 21A13 13 0 0 1 9 9L12 15Q8 17 8 21Z" fill="#fff" />
        <path d="M9 9A13 13 0 0 1 27 21H20Q19 16 12 15Z" fill={BLUE_FILL} stroke={BLUE_EDGE} />
        <path d="M11 21Q12 18 17 15L16 21Z" fill={INK} />
      </>
    ),
  },
  {
    name: "Card",
    art: (
      <>
        <rect x="1" y="4" width="26" height="20" fill="#fff" />
        <path d="M4 21H24" strokeWidth="1" />
        <text x="14" y="18" textAnchor="middle" fontSize="12" fill={BLUE} stroke="none">
          123
        </text>
      </>
    ),
  },
  {
    name: "Multi-row card",
    art: (
      <>
        <rect x="1" y="1" width="26" height="26" fill="#fff" />
        <path d="M5 5V23M8 12H16M8 21H16" strokeWidth="1.200" />
        <path d="M8 8H23M8 17H23" stroke={BLUE_EDGE} strokeWidth="3" />
      </>
    ),
  },
  {
    name: "KPI",
    art: (
      <>
        <rect x="1" y="3" width="26" height="22" fill="#fff" />
        <path d="M4 20H24" strokeWidth="1" />
        <path d="M4 16L9 7L13 16Z" fill="#7cc48a" stroke={GREEN} />
        <path d="M16 8H24L20 16Z" fill="#e8403a" stroke="#d13438" />
      </>
    ),
  },
  {
    name: "Slicer",
    art: (
      <>
        <path d="M13 27H1V1H27V13" fill="#fff" />
        <rect x="1" y="1" width="26" height="5" fill={GREY_FILL} />
        <path d="M6 11H10V15H6ZM6 19H10V23H6Z" fill={GREY_FILL} stroke="#605e5c" />
        <path d="M15 16H28V17L23 22V28H19V22L15 17Z" fill="#fff" />
      </>
    ),
  },
  {
    name: "Table",
    art: (
      <>
        <rect x="1" y="1" width="26" height="26" fill="#fff" />
        <path d="M1 13H27M1 20H27M10 6V27M18 6V27" strokeWidth="1.200" />
        <rect x="1" y="1" width="26" height="5" fill={GREY_FILL} />
      </>
    ),
  },
  {
    name: "Matrix",
    art: (
      <>
        <rect x="1" y="1" width="26" height="26" fill="#fff" />
        <path d="M18 6H27V27H1V20H18Z" fill={BLUE_FILL} stroke="none" />
        <path d="M1 13H27M1 20H27M10 6V27M18 6V27" stroke={BLUE_EDGE} strokeWidth="1.200" />
        <rect x="1" y="1" width="26" height="26" />
        <rect x="1" y="1" width="26" height="5" fill={GREY_FILL} />
      </>
    ),
  },
  {
    name: "R script visual",
    art: (
      <text x="13" y="22" textAnchor="middle" fontSize="24" fontWeight="700" fill={BLUE} stroke="none">
        R
      </text>
    ),
  },
  {
    name: "Python visual",
    art: (
      <text x="13" y="20" textAnchor="middle" fontSize="24" fontWeight="700" fill={BLUE} stroke="none">
        Py
      </text>
    ),
  },
  {
    name: "Key influencers",
    art: (
      <>
        <path d={axes} />
        <path d="M1 13H14M1 20H8" strokeWidth="1.200" />
        <path d="M1 5H19" stroke={BLUE} strokeWidth="2" />
        <circle cx="22" cy="5" r="3.200" fill={BLUE_FILL} stroke={BLUE_EDGE} />
        <path d="M14 11H18V15H14ZM8 18H12V22H8Z" fill={GREY_FILL} stroke="#605e5c" />
      </>
    ),
  },
  {
    name: "Decomposition tree",
    art: (
      <>
        <path d="M10 14H18M18 4H14V24H18" />
        <path d="M1 11H10V18H1ZM17 1H27V7H17ZM17 11H27V17H17ZM17 21H27V27H17Z" fill={BLUE_FILL} stroke={BLUE_EDGE} />
      </>
    ),
  },
  {
    name: "Q&A",
    art: <path d="M1 3H27V20H13L6 26V20H1Z" fill="#fff" stroke={BLUE_EDGE} />,
  },
  {
    name: "Smart narrative",
    art: (
      <>
        <path d="M4 1H17L24 8V27H4Z" fill="#fff" />
        <path d="M17 1V8H24" />
        <path d="M2 9H7V14H2Z" fill={BLUE_FILL} stroke={BLUE_EDGE} />
        <path d="M10 13H20M8 18H17" stroke={BLUE} />
      </>
    ),
  },
  {
    name: "Paginated report",
    art: (
      <>
        <path d="M3 0H17L25 8V28H3Z" fill={GREY_FILL} />
        <path d="M17 0V8H25" fill="#fff" />
        <path d="M9 25V16M14 25V20M20 25V13" strokeWidth="3.500" />
      </>
    ),
  },
];

const paneTabs = [
  {
    name: "Build visual",
    art: (
      <>
        <path d="M6 7H35" stroke="#252423" strokeWidth="2.500" />
        <path d="M6 15H42V27H6ZM6 32H42V44H6Z" fill="#f2c811" stroke="#252423" strokeWidth="2" strokeDasharray="3 2" />
      </>
    ),
  },
  {
    name: "Format visual",
    art: (
      <>
        <path d="M10 40V22H19V10H28V28M19 22V36M28 18H38" />
        <path d="M41 21L29 37L25 34ZM25 34L29 38Q28 44 15 43Q20 41 20 37Q22 33 25 34Z" fill="#f3f2f1" />
      </>
    ),
  },
  {
    name: "Analytics",
    art: (
      <>
        <circle cx="22" cy="22" r="15" />
        <path d="M7 24L15 18L21 23L35 14M15 26V34M21 27V36M26 24V35M31 22V31" />
        <path d="M32 33L42 43" strokeWidth="4" />
      </>
    ),
  },
];

function Pill({ name, child }: { name: string; child?: string }) {
  return (
    <div className="rounded-[3px] border border-[#b3b0ad] bg-[#edebe9] pr-1 pl-[5px]">
      {[name, child].map(
        (label, i) =>
          label && (
            <div key={label} className={clsx("flex items-center", child ? "h-[33px]" : "h-[34px]")}>
              <span className={clsx("flex-1", i === 1 && "pl-3")}>{label}</span>
              {i === 0 && (
                <button aria-label={`${label} options`} className="mr-2">
                  <svg viewBox="0 0 18 10" className="h-[10px] w-[18px]" fill="none" stroke={INK} strokeWidth="1.4">
                    <path d="M0.500 0.500L9 9L17.500 0.500" />
                  </svg>
                </button>
              )}
              <button aria-label={`Remove ${label}`}>
                <svg viewBox="0 0 14 14" className="size-[14px]" stroke={INK} strokeWidth="1.4">
                  <path d="M1 1L13 13M13 1L1 13" />
                </svg>
              </button>
            </div>
          ),
      )}
    </div>
  );
}

function FieldWell({ title, children }: { title: string; children?: ReactNode }) {
  return (
    <section className="mb-[10px]">
      <h3 className="flex h-[42px] items-center pl-3">{title}</h3>
      {children}
    </section>
  );
}

function VisualizationsPane() {
  const [selected, setSelected] = useState("Line chart");

  return (
    <aside className="flex w-[271px] shrink-0 flex-col overflow-hidden border-t border-l border-[#d2d0ce] text-[17px] text-[#252423]">
      <div className="flex h-[60px] shrink-0 items-start justify-between pt-4 pr-3 pl-3">
        <h2 className="text-[22px] leading-8 font-semibold">Visualizations</h2>
        <button aria-label="Collapse visualizations" className="mt-[5px]">
          <DoubleChevron />
        </button>
      </div>
      <p className="h-[31px] shrink-0 pl-3 leading-6 font-medium">Build visual</p>
      <div className="flex h-[71px] shrink-0 justify-between border-b border-[#8a8886] pr-3 pl-3">
        {paneTabs.map((tab, i) => (
          <div key={tab.name} className="flex flex-col items-center gap-2">
            <button aria-label={tab.name} className={clsx("rounded-[3px]", i === 0 && "bg-[#d2d0ce]")}>
              <svg viewBox="0 0 48 51" className="h-[51px] w-12" fill="none" stroke={INK} strokeWidth="1.8">
                {tab.art}
              </svg>
            </button>
            {i === 0 && (
              <svg viewBox="0 0 12 7" className="h-[7px] w-3" fill="none" stroke="#605e5c" aria-hidden="true">
                <path d="M1 6L6 1L11 6" />
              </svg>
            )}
          </div>
        ))}
      </div>
      <div className="grid h-[292px] shrink-0 auto-rows-[45px] grid-cols-[repeat(6,42px)] border-b border-[#d2d0ce] pt-3 pl-[9px]">
        {vizIcons.map((viz) => (
          <button
            key={viz.name}
            aria-label={viz.name}
            onClick={() => setSelected(viz.name)}
            className={clsx(
              "m-auto grid h-[38px] w-9 place-items-center",
              selected === viz.name && "border-2 border-black bg-[#e6e5e4]",
            )}
          >
            <svg viewBox="0 0 28 28" className="size-7 overflow-visible" fill="none" stroke={INK} strokeWidth="1.6">
              {viz.art}
            </svg>
          </button>
        ))}
        <button aria-label="Get more visuals" className="m-auto">
          <Dots />
        </button>
      </div>
      <div className="flex min-h-0 flex-1 overflow-hidden pl-[6px]">
        <div className="w-[255px] pt-[7px]">
          <FieldWell title="X-axis">
            <div className="h-[88px] border-2 border-dashed border-[#c8c6c4] bg-white p-1">
              <Pill name="Order Date" child="Month" />
            </div>
          </FieldWell>
          <FieldWell title="Y-axis">
            <div className="flex h-[98px] flex-col gap-1 border-2 border-dashed border-[#c8c6c4] bg-white p-1">
              <Pill name="Sales" />
              <Pill name="Profit" />
            </div>
          </FieldWell>
          <FieldWell title="Secondary y-axis">
            <button className="h-11 w-full border-2 border-dashed border-[#c8c6c4] bg-white pt-px pl-[13px] text-left">
              Add data fields here
            </button>
          </FieldWell>
          <FieldWell title="Legend" />
        </div>
        <div className="mt-1 h-[195px] w-[9px] rounded-full bg-[#d0cecc]" />
      </div>
    </aside>
  );
}

/* ---------- Fields pane ---------- */

type Field = { name: string; kind?: "sum" | "date"; checked?: boolean };

const fields: Field[] = [
  { name: "Customer ID", kind: "sum" },
  { name: "Customer Name" },
  { name: "Customer Seg..." },
  { name: "Discount", kind: "sum" },
  { name: "Order Date", kind: "date", checked: true },
  { name: "Order ID", kind: "sum" },
  { name: "Order Priority" },
  { name: "Postal Code", kind: "sum" },
  { name: "Product Base ...", kind: "sum" },
  { name: "Product Categ..." },
  { name: "Product Contai..." },
  { name: "Product Name" },
  { name: "Product Sub-C..." },
  { name: "Profit", kind: "sum", checked: true },
  { name: "Quantity order...", kind: "sum" },
  { name: "Region" },
  { name: "Row ID", kind: "sum" },
  { name: "Sales", kind: "sum", checked: true },
  { name: "Ship Date", kind: "date" },
  { name: "Ship Mode" },
];

function CalendarIcon({ used }: { used?: boolean }) {
  return (
    <svg viewBox="0 0 26 26" className="size-[26px] overflow-visible" fill="none" stroke="#252423" strokeWidth="1.6">
      <path d="M1 3H25V24H1ZM6 0V6M20 0V6M1 7H25" />
      <path d="M6 12H22M6 16H22M6 20H22" strokeDasharray="2 2.400" />
      {used && (
        <>
          <circle cx="22" cy="23" r="9" fill="#f2c811" stroke="none" />
          <path d="M18 23L21 26L26 20" strokeWidth="2.400" />
        </>
      )}
    </svg>
  );
}

function FieldRow({ field }: { field: Field }) {
  const [checked, setChecked] = useState(Boolean(field.checked));

  return (
    <li className="flex items-center">
      <span className="grid w-5 shrink-0">
        {field.kind === "date" && (
          <svg viewBox="0 0 10 20" className="h-5 w-[10px]" fill="none" stroke="#605e5c" strokeWidth="1.5" aria-hidden="true">
            <path d="M1 1L9 10L1 19" />
          </svg>
        )}
      </span>
      <label className="flex items-center whitespace-nowrap">
        <span className="grid size-[18px] shrink-0">
          <input
            type="checkbox"
            checked={checked}
            onChange={(e) => setChecked(e.target.checked)}
            className="col-start-1 row-start-1 size-[18px] appearance-none rounded-[3px] border border-[#605e5c] checked:border-[#f2c811] checked:bg-[#f2c811]"
          />
          {checked && (
            <svg viewBox="0 0 18 18" className="pointer-events-none col-start-1 row-start-1" fill="none" stroke={INK} strokeWidth="1.3">
              <path d="M3 9L7 13L15 5" />
            </svg>
          )}
        </span>
        <span className="grid w-[39px] shrink-0 place-items-center pl-[2px]">
          {field.kind === "sum" && (
            <svg viewBox="0 0 16 22" className="h-[22px] w-4" fill="none" stroke={INK} strokeWidth="1.7" aria-hidden="true">
              <path d="M16 1H1L9 11L1 21H16" />
            </svg>
          )}
          {field.kind === "date" && <CalendarIcon used={field.checked} />}
        </span>
        {field.name}
      </label>
    </li>
  );
}

function FieldsPane() {
  return (
    <aside className="flex w-[271px] shrink-0 flex-col border-t border-l border-[#d2d0ce] pb-3 text-[17px] text-[#3b3a39]">
      <div className="flex h-[72px] shrink-0 items-start justify-between pt-4 pr-3 pl-3">
        <h2 className="text-[22px] leading-8 font-semibold text-[#252423]">Fields</h2>
        <button aria-label="Collapse fields" className="mt-[5px]">
          <DoubleChevron />
        </button>
      </div>
      <label className="mr-[7px] ml-[6px] flex h-[43px] shrink-0 items-center gap-2 rounded-[3px] border border-[#605e5c] bg-white pl-3">
        <SearchIcon className="size-[22px] shrink-0" />
        <input
          aria-label="Search fields"
          placeholder="Search"
          className="w-full bg-transparent text-lg outline-none placeholder:text-[#605e5c]"
        />
      </label>
      <div className="mt-3 flex min-h-0 flex-1 overflow-hidden">
        <ul className="-mt-6 ml-[37px] grid h-[767px] w-[215px] shrink-0 auto-rows-fr">
          {fields.map((field) => (
            <FieldRow key={field.name} field={field} />
          ))}
        </ul>
        <div className="mt-[148px] h-[489px] w-3 bg-[#c8c6c4]" />
      </div>
    </aside>
  );
}

/* ---------- Status bar ---------- */

function StatusBar() {
  return (
    <footer className="flex h-[30px] shrink-0 items-start border-t border-[#d2d0ce] pt-[6px] pl-2 text-[17px] leading-6 text-[#3b3a39]">
      <span>Page 1 of 1</span>
      <div className="ml-auto flex h-6 items-center">
        <button aria-label="Zoom out" className="w-3">
          -
        </button>
        <input
          type="range"
          aria-label="Zoom"
          defaultValue={50}
          className="h-[18px] w-[150px] appearance-none bg-[linear-gradient(#605e5c,#605e5c)] bg-[length:100%_2px] bg-center bg-no-repeat [&::-webkit-slider-thumb]:h-[18px] [&::-webkit-slider-thumb]:w-[6px] [&::-webkit-slider-thumb]:appearance-none [&::-webkit-slider-thumb]:bg-[#605e5c]"
        />
        <button aria-label="Zoom in" className="ml-2 w-4 text-lg leading-6">
          +
        </button>
        <span className="ml-[18px] w-[76px]">100%</span>
        <button aria-label="Fit to page" className="mr-[26px] pt-1">
          <svg viewBox="0 0 24 20" className="h-5 w-6" fill="none" stroke={INK} strokeWidth="1.6">
            <path d="M1 1H23V19H1ZM5 8V5H9M15 5H19V8M5 13V16H9M15 16H19V13" />
          </svg>
        </button>
      </div>
    </footer>
  );
}

/* ---------- Callouts drawn over the window ---------- */

function Callouts() {
  return (
    <svg viewBox="0 0 2048 1152" className="pointer-events-none absolute inset-0 h-full w-full" aria-hidden="true">
      <defs>
        <marker id="tip" viewBox="0 0 10 10" refX="9" refY="5" markerWidth="14" markerHeight="12" markerUnits="userSpaceOnUse" orient="auto">
          <path d="M0 0L10 5L0 10Z" fill="#5b9bd5" />
        </marker>
      </defs>
      <path d="M24 1106V315H10L38 287L66 315H52V1106Z" fill="#70ad47" stroke="#fff" strokeWidth="7" paintOrder="stroke" />
      <path d="M52 502L1634 939" stroke="#70ad47" strokeWidth="3.500" />
      <path d="M1545 496L1053 350" stroke="#5b9bd5" strokeWidth="2" markerEnd="url(#tip)" />
      <path d="M1597 787L813 1091" stroke="#5b9bd5" strokeWidth="2" markerEnd="url(#tip)" />
      <path d="M102 1106H1203V1092L1233 1122L1203 1151V1137H102Z" fill="#5b9bd5" stroke="#41719c" strokeWidth="1.500" />
    </svg>
  );
}

function Tooltip() {
  return (
    <div
      role="tooltip"
      className="absolute top-[412px] right-[460px] flex h-[49px] w-[102px] items-center justify-center rounded-[3px] bg-white pt-1 text-[17px] whitespace-nowrap text-[#252423] shadow-[0_3px_10px_rgba(0,0,0,0.2)]"
    >
      Line chart
      <svg viewBox="0 0 22 11" className="absolute top-full left-10 h-[11px] w-[22px]" fill="#fff" aria-hidden="true">
        <path d="M0 0H22L11 11Z" />
      </svg>
    </div>
  );
}

export default function App() {
  return (
    <div className="relative flex h-screen flex-col overflow-hidden bg-[#f3f2f1] font-['Open_Sans','Noto_Sans',sans-serif]">
      <TitleBar />
      <RibbonTabs />
      <Ribbon />
      <div className="flex min-h-0 flex-1">
        <ViewRail />
        <ReportCanvas />
        <FiltersPane />
        <VisualizationsPane />
        <FieldsPane />
      </div>
      <StatusBar />
      <Tooltip />
      <Callouts />
    </div>
  );
}
